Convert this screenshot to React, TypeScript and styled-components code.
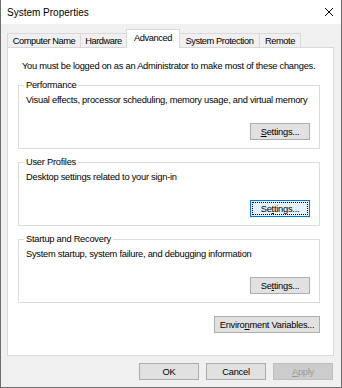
import React from 'react'
import styled, { createGlobalStyle, css } from 'styled-components'

const GlobalStyle = createGlobalStyle`
  body {
    margin: 0;
    background: #f0f0f0;
    font-family: "Liberation Sans", Arial, sans-serif;
    color: #000;
  }
`

const Window = styled.div`
  width: 342px;
  height: 388px;
  box-sizing: border-box;
  background: #f0f0f0;
  border: 1px solid #6e6e6e;
  border-top: none;
`
const TitleBar = styled.div`
  height: 24px;
  display: flex;
  align-items: center;
  justify-content: space-between;
  padding: 0 7px 0 6px;
  background: #fff;
  font-size: 10px;
`
const Body = styled.div`
  padding: 5px 7px 0 6px;
  font-size: 9.3px;
  letter-spacing: -0.25px;
`
const TabStrip = styled.div`
  display: flex;
  align-items: flex-end;
  height: 18px;
  position: relative;
  z-index: 2;
`
const Tab = styled.div<{ $w: number; $active?: boolean }>`
  width: ${p => p.$w}px;
  height: 14px;
  box-sizing: border-box;
  display: flex;
  align-items: center;
  justify-content: center;
  margin-right: -1px;
  border: 1px solid #d9d9d9;
  border-bottom: none;
  background: #f0f0f0;
  letter-spacing: -0.45px;
  white-space: nowrap;
  ${p => p.$active && css`
    height: 19px;
    margin-bottom: -1px;
    background: #fff;
    padding-bottom: 2px;
  `}
`
const Panel = styled.div`
  height: 309px;
  box-sizing: border-box;
  background: #fff;
  border: 1px solid #d9d9d9;
  padding: 12px 13px 0 10px;
`
const Intro = styled.p`
  margin: 0;
  padding-left: 4px;
  line-height: 12px;
  white-space: nowrap;
`
const Group = styled.fieldset`
  margin: 7px 0 0;
  padding: 3px 9px 8px 7px;
  border: 1px solid #dcdcdc;
  min-width: 0;
`
const Legend = styled.legend`
  padding: 0 2px;
  margin-left: -2px;
  line-height: 12px;
`
const Desc = styled.div`
  line-height: 12px;
  white-space: nowrap;
`
const ButtonRow = styled.div<{ $top: number }>`
  display: flex;
  justify-content: flex-end;
  gap: 7px;
  margin-top: ${p => p.$top}px;
`
const Button = styled.button<{ $w: number; $focused?: boolean }>`
  width: ${p => p.$w}px;
  height: 17px;
  padding: 0;
  box-sizing: border-box;
  font-family: inherit;
  font-size: 9.3px;
  letter-spacing: -0.25px;
  color: #000;
  background: #e1e1e1;
  border: 1px solid #adadad;
  ${p => p.$focused && css`
    background: #e5f1fb;
    border-color: #0078d7;
    outline: 1px dotted #000;
    outline-offset: -3px;
  `}
  &:disabled {
    background: #cccccc;
    border-color: #bfbfbf;
    color: #9a9a9a;
  }
`
const Footer = styled.div`
  display: flex;
  justify-content: flex-end;
  gap: 7px;
  margin-top: 7px;
  padding-right: 1px;
`
const Key = styled.span`
  text-decoration: underline;
`

function CloseIcon() {
  return (
    <svg width="10" height="10" viewBox="0 0 10 10">
      <path d="M1 1 L9 9 M9 1 L1 9" stroke="#000" strokeWidth="1" fill="none" />
    </svg>
  )
}

export default function App() {
  return (
    <>
      <GlobalStyle />
      <Window>
        <TitleBar>
          <span>System Properties</span>
          <CloseIcon />
        </TitleBar>
        <Body>
          <TabStrip>
            <Tab $w={74}>Computer Name</Tab>
            <Tab $w={47}>Hardware</Tab>
            <Tab $w={54} $active>Advanced</Tab>
            <Tab $w={81}>System Protection</Tab>
            <Tab $w={42}>Remote</Tab>
          </TabStrip>
          <Panel>
            <Intro>You must be logged on as an Administrator to make most of these changes.</Intro>
            <Group>
              <Legend>Performance</Legend>
              <Desc>Visual effects, processor scheduling, memory usage, and virtual memory</Desc>
              <ButtonRow $top={17}>
                <Button $w={60}><Key>S</Key>ettings...</Button>
              </ButtonRow>
            </Group>
            <Group>
              <Legend>User Profiles</Legend>
              <Desc>Desktop settings related to your sign-in</Desc>
              <ButtonRow $top={17}>
                <Button $w={60} $focused>Se<Key>t</Key>tings...</Button>
              </ButtonRow>
            </Group>
            <Group>
              <Legend>Startup and Recovery</Legend>
              <Desc>System startup, system failure, and debugging information</Desc>
              <ButtonRow $top={17}>
                <Button $w={60}>Se<Key>t</Key>tings...</Button>
              </ButtonRow>
            </Group>
            <ButtonRow $top={13}>
              <Button $w={106}>Enviro<Key>n</Key>ment Variables...</Button>
            </ButtonRow>
          </Panel>
          <Footer>
            <Button $w={60}>OK</Button>
            <Button $w={60}>Cancel</Button>
            <Button $w={60} disabled><Key>A</Key>pply</Button>
          </Footer>
        </Body>
      </Window>
    </>
  )
}
